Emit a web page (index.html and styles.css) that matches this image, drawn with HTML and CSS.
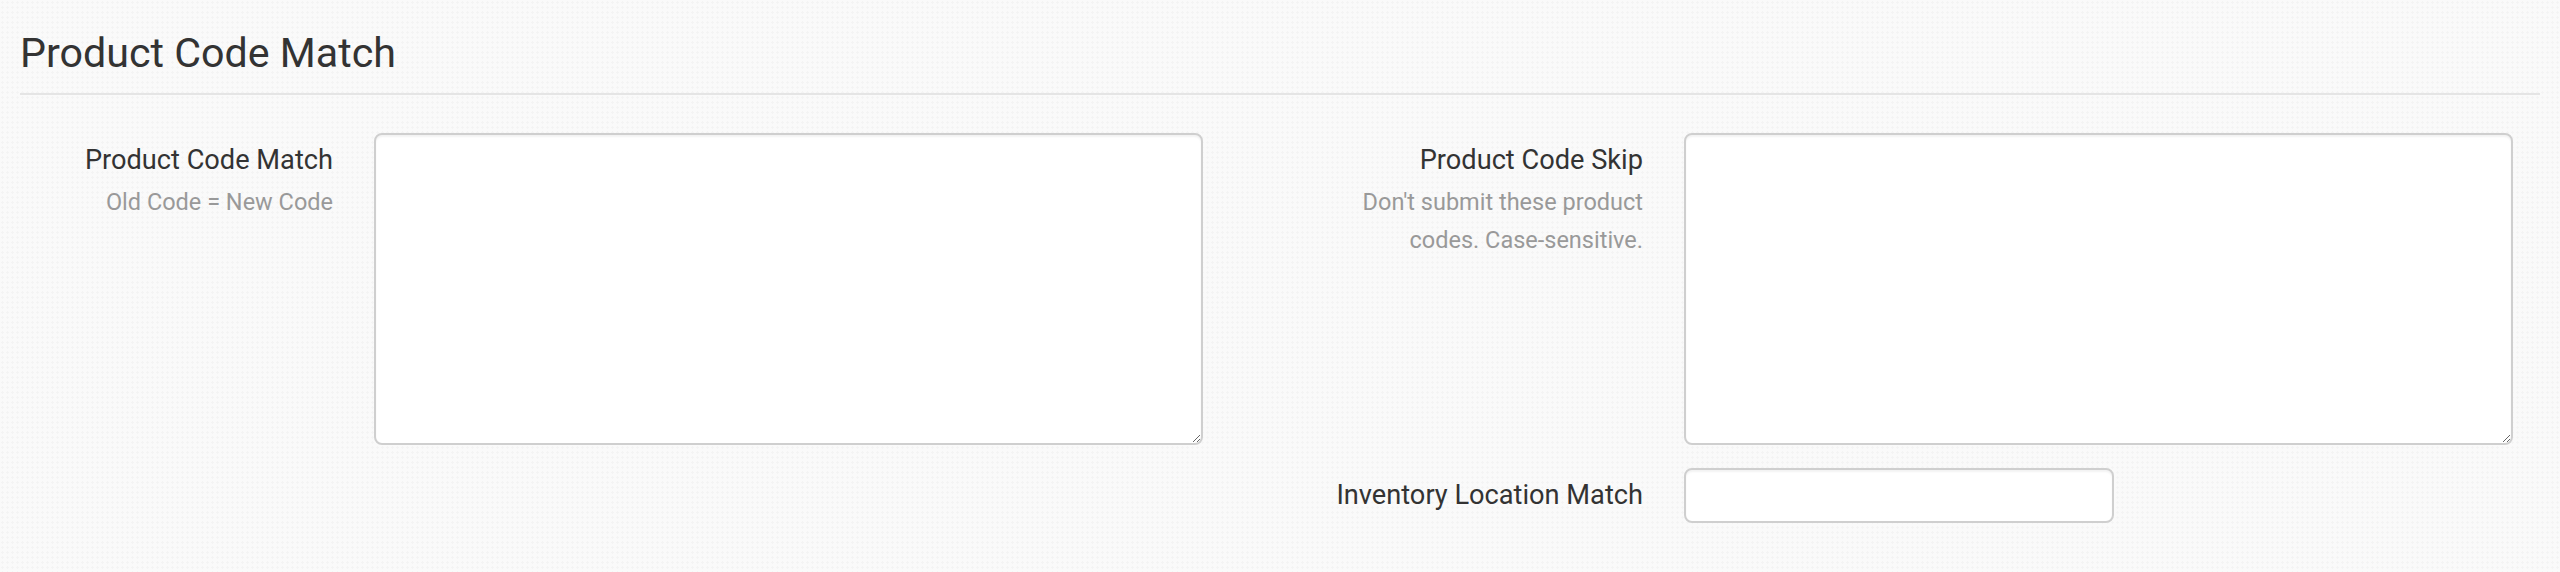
FILE: index.html
```html
<!DOCTYPE html>
<html lang="en">
<head>
<meta charset="utf-8">
<title>Product Code Match</title>
<link rel="stylesheet" href="styles.css">
</head>
<body>
<div class="page">
  <h2 class="title">Product Code Match</h2>
  <div class="form">
    <div class="col">
      <div class="field">
        <div class="label-block">
          <label class="label" for="pcm">Product Code Match</label>
          <div class="hint">Old Code = New Code</div>
        </div>
        <textarea id="pcm" class="control area"></textarea>
      </div>
    </div>
    <div class="col">
      <div class="field">
        <div class="label-block">
          <label class="label" for="pcs">Product Code Skip</label>
          <div class="hint">Don't submit these product<br>codes. Case-sensitive.</div>
        </div>
        <textarea id="pcs" class="control area"></textarea>
      </div>
      <div class="field">
        <div class="label-block">
          <label class="label" for="ilm">Inventory Location Match</label>
        </div>
        <input id="ilm" class="control text" type="text">
      </div>
    </div>
  </div>
</div>
</body>
</html>
```
FILE: styles.css
```css
html, body {
  margin: 0;
  padding: 0;
}
body {
  background-color: #fafafa;
  background-image: radial-gradient(circle, rgba(0,0,0,0.022) 1px, transparent 1.2px);
  background-size: 5px 5px;
  font-family: Roboto, "Liberation Sans", sans-serif;
  color: #333;
  width: 2560px;
  height: 572px;
  overflow: hidden;
}
.page {
  padding: 0 20px 0 20px;
}
.title {
  margin: 30px 0 0;
  font-size: 41.2px;
  font-weight: 400;
  line-height: 46px;
  color: #333;
  padding-bottom: 17px;
  border-bottom: 2px solid #e5e5e5;
}
.form {
  display: grid;
  grid-template-columns: 1fr 1fr;
  column-gap: 127px;
  padding: 38px 27px 0 0;
}
.col {
  display: flex;
  flex-direction: column;
  gap: 23px;
}
.field {
  display: grid;
  grid-template-columns: 313px 1fr;
  column-gap: 41px;
  align-items: start;
}
.label-block {
  text-align: right;
  padding-top: 7px;
  white-space: nowrap;
}
.label {
  display: block;
  font-size: 27.2px;
  line-height: 40px;
  color: #333;
}
.hint {
  margin-top: 3px;
  font-size: 23.5px;
  line-height: 38px;
  color: #999;
}
.control {
  box-sizing: border-box;
  background: #fff;
  border: 2px solid #cfcfcf;
  border-radius: 8px;
  box-shadow: inset 0 2px 2px rgba(0,0,0,0.05);
  font-family: Roboto, "Liberation Sans", sans-serif;
  font-size: 28px;
  margin: 0;
  display: block;
}
.area {
  width: 100%;
  height: 312px;
  resize: both;
}
.text {
  width: 430px;
  height: 55px;
}
```
